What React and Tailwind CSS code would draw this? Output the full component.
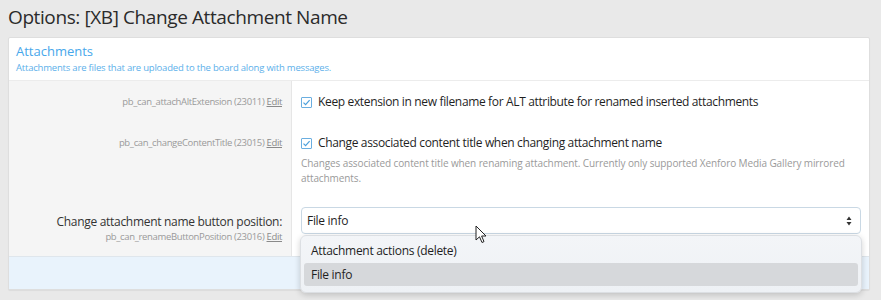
import React from "react";

function CheckBox() {
  return (
    <span className="inline-flex w-[11px] h-[11px] border border-[#6aaee0] rounded-[1px] bg-white items-center justify-center shrink-0">
      <svg width="9" height="9" viewBox="0 0 9 9">
        <path d="M1.5 4.6 L3.6 6.6 L7.6 2.2" fill="none" stroke="#4a9fdc" strokeWidth="1.2" />
      </svg>
    </span>
  );
}

function OptionRow({ label, height, top, labelTop, children }) {
  return (
    <div className="grid grid-cols-[283px_1fr]" style={{ height }}>
      <div className="bg-[#f5f5f5] border-r border-[#e6e6e6] text-right pr-[9px]" style={{ paddingTop: labelTop ?? top }}>
        {label}
      </div>
      <div className="bg-white pl-[9px] pr-[8px]" style={{ paddingTop: top }}>
        {children}
      </div>
    </div>
  );
}

function Hint({ name, id }) {
  return (
    <div className="text-[9.5px] leading-[14px] tracking-[-0.35px] text-[#9a9a9a]">
      {name} ({id}) <span className="underline text-[#8a8a8a]">Edit</span>
    </div>
  );
}

export default function App() {
  return (
    <div className="relative w-[881px] h-[300px] overflow-hidden bg-[#e9e9e9] font-['Open_Sans',sans-serif]">
      <h1 className="pl-[8px] pt-[3px] text-[19px] leading-[28px] tracking-[-0.4px] text-[#2b2b2b]">
        Options: [XB] Change Attachment Name
      </h1>

      <div className="ml-[8px] mt-[6px] w-[862px] bg-white border border-[#dedede] rounded-[2px] shadow-[0_1px_1px_rgba(0,0,0,0.06)]">
        <div className="px-[7px] pt-[4px] pb-[6px] border-b border-[#ececec]">
          <div className="text-[13px] leading-[19px] text-[#47a7eb]">Attachments</div>
          <div className="text-[9.5px] leading-[13px] tracking-[-0.2px] text-[#5cb0ea]">
            Attachments are files that are uploaded to the board along with messages.
          </div>
        </div>

        <OptionRow height={42} top={14} label={<Hint name="pb_can_attachAltExtension" id="23011" />}>
          <div className="flex items-center gap-[6px] text-[12px] leading-[14px] tracking-[-0.35px] text-[#1f1f1f]">
            <CheckBox />
            <span>Keep extension in new filename for ALT attribute for renamed inserted attachments</span>
          </div>
        </OptionRow>

        <OptionRow height={74} top={13} label={<Hint name="pb_can_changeContentTitle" id="23015" />}>
          <div className="flex items-center gap-[6px] text-[12px] leading-[14px] tracking-[-0.35px] text-[#1f1f1f]">
            <CheckBox />
            <span>Change associated content title when changing attachment name</span>
          </div>
          <div className="mt-[6px] text-[10px] leading-[15px] tracking-[-0.1px] text-[#9a9a9a]">
            Changes associated content title when renaming attachment. Currently only supported Xenforo Media Gallery mirrored attachments.
          </div>
        </OptionRow>

        <OptionRow
          height={59}
          top={10}
          labelTop={17}
          label={
            <div className="flex flex-col items-end">
              <div className="text-[12px] leading-[16px] tracking-[-0.3px] text-[#333]">Change attachment name button position:</div>
              <Hint name="pb_can_renameButtonPosition" id="23016" />
            </div>
          }
        >
          <div className="h-[27px] border border-[#c9d8e4] rounded-[4px] bg-white flex items-center justify-between pl-[5px] pr-[8px] text-[12px] tracking-[-0.3px] text-[#1f1f1f]">
            <span>File info</span>
            <svg width="6" height="10" viewBox="0 0 6 10">
              <path d="M3 0.5 L5.5 4 L0.5 4 Z M3 9.5 L5.5 6 L0.5 6 Z" fill="#333" />
            </svg>
          </div>
        </OptionRow>

        <div className="h-[33px] bg-[#e9f3fc] border-t border-[#dfe6ec]" />
      </div>

      <div className="absolute left-[300px] top-[235px] w-[562px] h-[58px] rounded-[6px] border border-[#dcdfe3] bg-gradient-to-b from-[#f3f5f8] to-[#eef1f5] shadow-[0_2px_6px_rgba(0,0,0,0.18)] p-[3px] text-[12px] tracking-[-0.3px] text-[#1f1f1f]">
        <div className="h-[24px] flex items-center pl-[7px]">Attachment actions (delete)</div>
        <div className="h-[23px] flex items-center pl-[7px] rounded-[3px] bg-[#d6d8db]">File info</div>
      </div>

      <svg className="absolute left-[475px] top-[225px]" width="13" height="20" viewBox="0 0 13 20">
        <path d="M1 1 L1 15 L4.5 11.8 L7 17.5 L9 16.6 L6.6 11 L11 11 Z" fill="#fff" stroke="#222" strokeWidth="1" strokeLinejoin="round" />
      </svg>
    </div>
  );
}
